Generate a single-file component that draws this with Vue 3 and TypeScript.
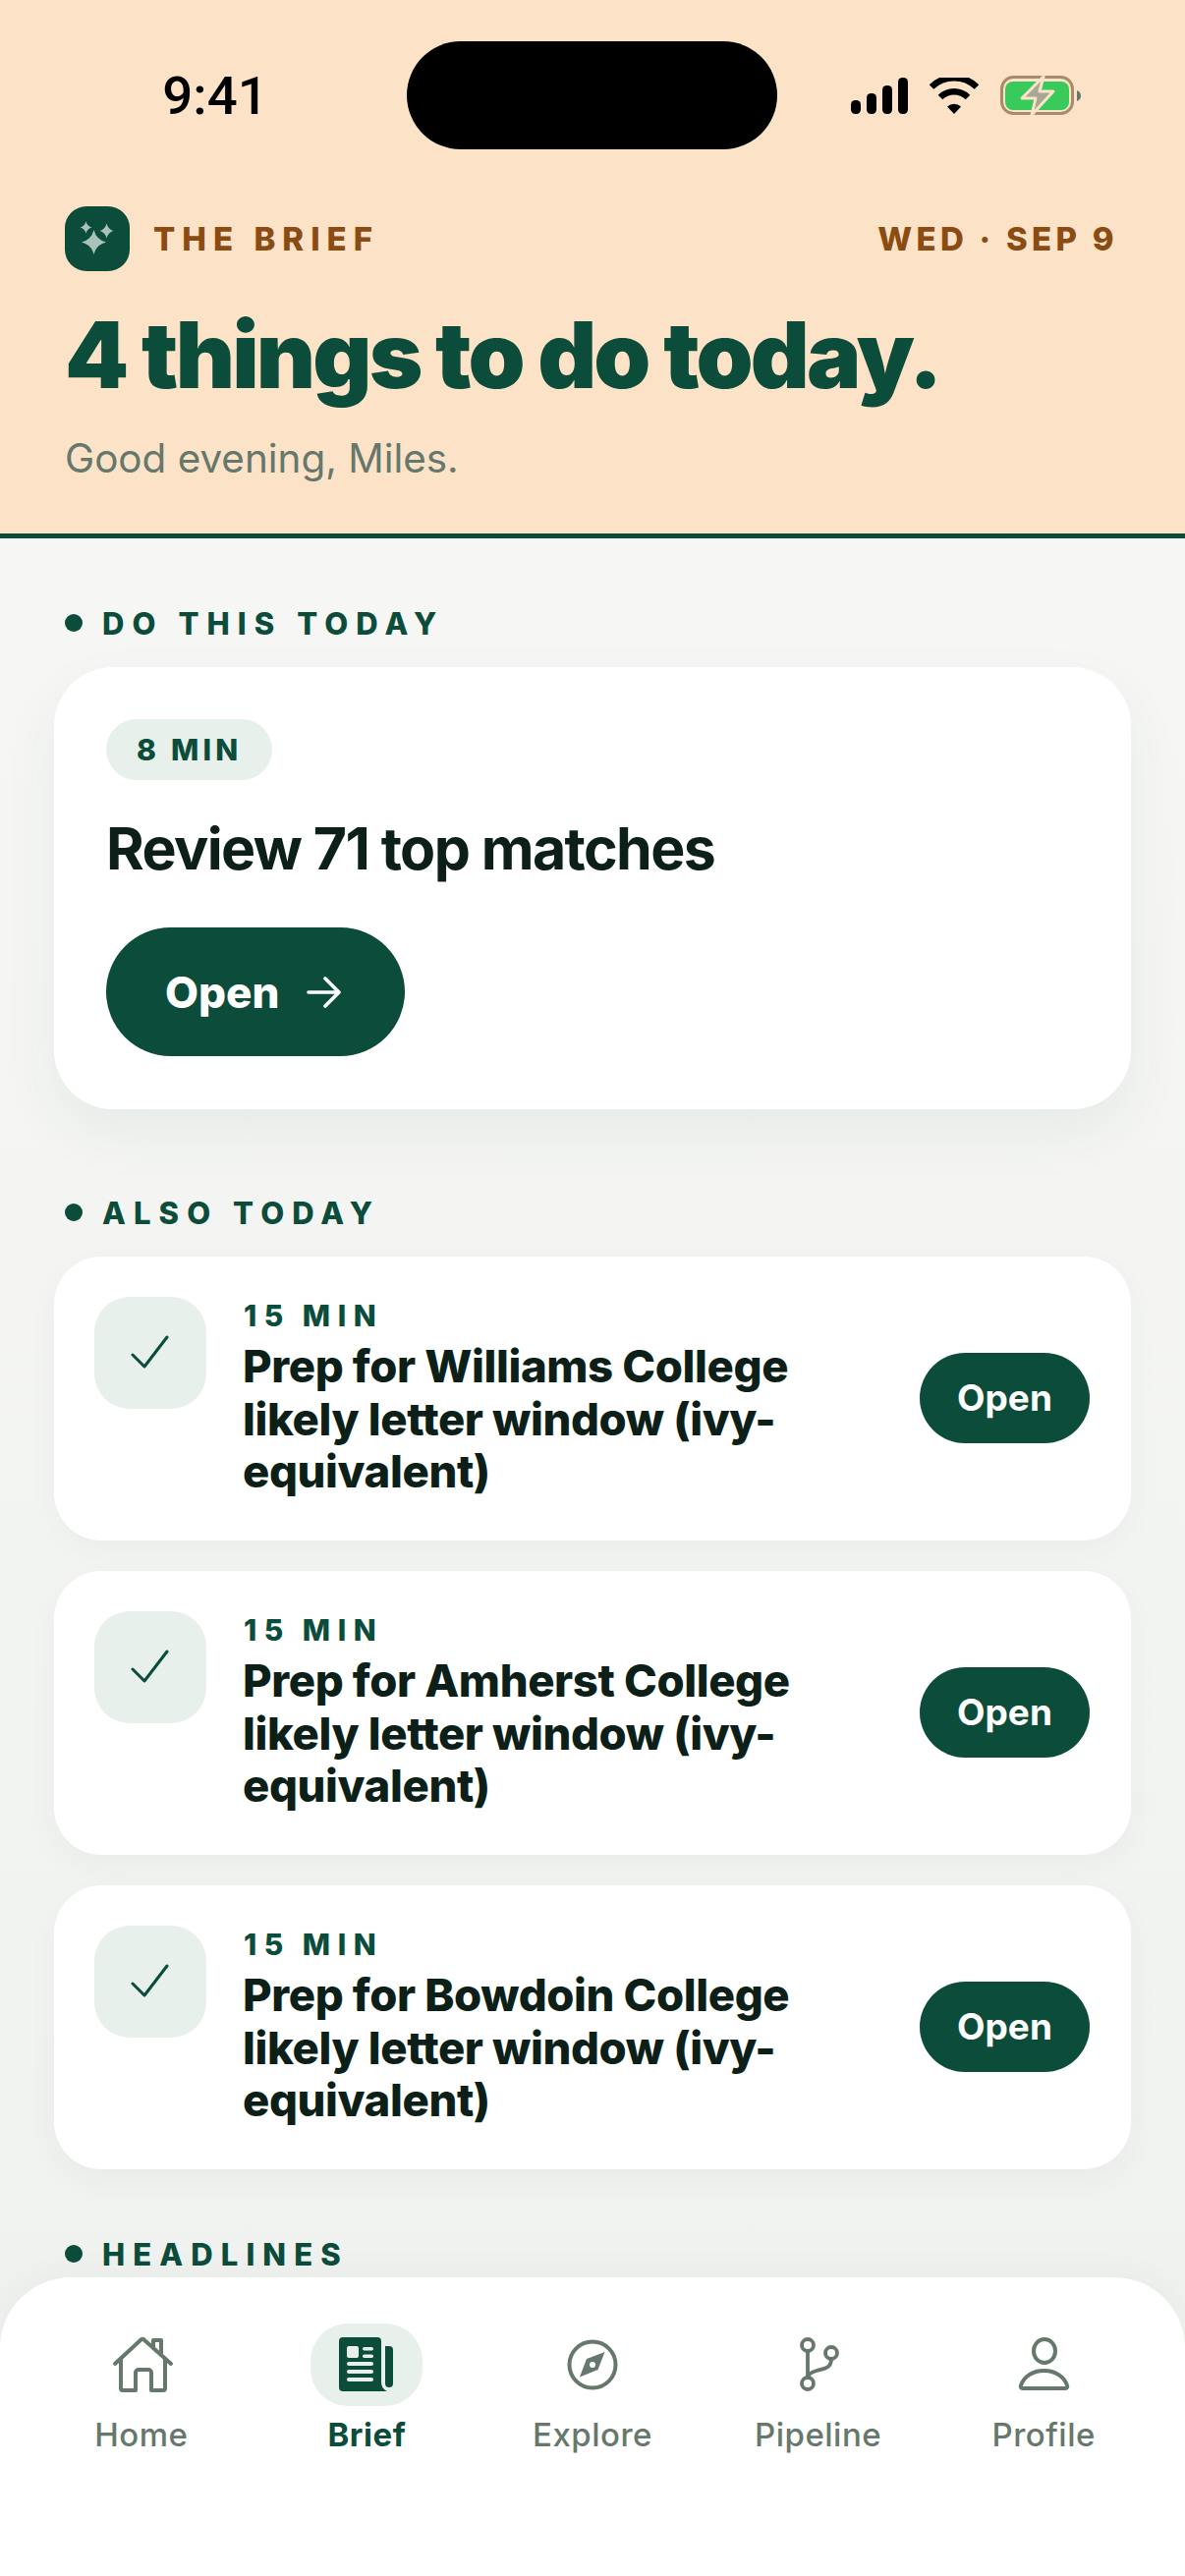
<script setup lang="ts">
interface Task {
  id: number
  mins: string
  college: string
}

const tasks: Task[] = [
  { id: 1, mins: '15 MIN', college: 'Williams College' },
  { id: 2, mins: '15 MIN', college: 'Amherst College' },
  { id: 3, mins: '15 MIN', college: 'Bowdoin College' },
]
</script>

<template>
  <div class="screen">
    <header class="hero">
      <div class="status">
        <span class="status__time">9:41</span>
        <span class="status__island"></span>
        <span class="status__icons">
          <svg width="58" height="37" viewBox="0 0 58 37">
            <rect x="0" y="23" width="10" height="14" rx="4.500" />
            <rect x="16" y="16" width="10" height="21" rx="4.500" />
            <rect x="32" y="8" width="10" height="29" rx="4.500" />
            <rect x="48" y="0" width="10" height="37" rx="4.500" />
          </svg>
          <svg width="50" height="37" viewBox="0 0 50 37">
            <path d="M2 9.500a33 33 0 0 1 46 0" fill="none" stroke="#000" stroke-width="6.500" />
            <path d="M11 20a20 20 0 0 1 28 0" fill="none" stroke="#000" stroke-width="6.500" />
            <path d="M18 29.500a10 10 0 0 1 14 0L25 37z" />
          </svg>
          <svg width="82" height="41" viewBox="0 0 82 41">
            <rect x="1.500" y="1.500" width="72" height="37" rx="12" fill="none" stroke="#a88a6d" stroke-width="3" />
            <rect x="5" y="6" width="65" height="29" rx="8" fill="#38cb5c" />
            <path d="M78 15c3 1 4 3 4 5.500s-1 4.500-4 5.500z" fill="#66776c" />
            <path d="M44 1 22 23h14l-4 17 22-24H40z" fill="#a9a696" stroke="#fce3c8" stroke-width="3" stroke-linejoin="round" />
          </svg>
        </span>
      </div>
      <div class="hero__meta">
        <span class="hero__brand">
          <svg class="hero__logo" width="66" height="66" viewBox="0 0 66 66">
            <rect width="66" height="66" rx="22" fill="#0c4c3a" />
            <g fill="#a9c2ba">
              <path d="M29.500 24Q32 34 42 36.500 32 39 29.500 49 27 39 17 36.500 27 34 29.500 24z" />
              <path d="M21.500 15.500Q22.800 20.200 27.500 21.500 22.800 22.800 21.500 27.500 20.200 22.800 15.500 21.500 20.200 20.200 21.500 15.500z" />
              <path d="M42.500 17.500Q44 23.500 49.500 25 44 26.500 42.500 32.500 41 26.500 35.500 25 41 23.500 42.500 17.500z" />
            </g>
          </svg>
          THE BRIEF
        </span>
        <span class="hero__date">WED · SEP 9</span>
      </div>
      <h1 class="hero__title">4 things to do today.</h1>
      <p class="hero__greeting">Good evening, Miles.</p>
    </header>

    <main class="content">
      <h2 class="section-label"><i></i>DO THIS TODAY</h2>
      <section class="focus">
        <span class="focus__pill">8 MIN</span>
        <h3 class="focus__title">Review 71 top matches</h3>
        <button class="focus__btn" type="button">
          Open
          <svg width="36" height="36" viewBox="0 0 36 36" fill="none" stroke="#fff" stroke-width="3.600" stroke-linecap="round" stroke-linejoin="round">
            <path d="M3 18h31M20 4l14 14-14 14" />
          </svg>
        </button>
      </section>

      <h2 class="section-label section-label--next"><i></i>ALSO TODAY</h2>
      <section class="tasks">
        <article v-for="task in tasks" :key="task.id" class="task">
          <span class="task__check">
            <svg width="40" height="36" viewBox="0 0 40 36" fill="none" stroke="#0c4c3a" stroke-width="3" stroke-linecap="round" stroke-linejoin="round">
              <path d="M2 20l12 12L37 2" />
            </svg>
          </span>
          <div class="task__body">
            <span class="task__mins">{{ task.mins }}</span>
            <h3 class="task__title">Prep for {{ task.college }} likely letter window (ivy-equivalent)</h3>
          </div>
          <button class="task__btn" type="button">Open</button>
        </article>
      </section>

      <h2 class="section-label"><i></i>HEADLINES</h2>
    </main>

    <nav class="tabbar">
      <a class="tab">
        <span class="tab__icon">
          <svg width="66" height="66" viewBox="0 0 66 66" fill="none" stroke="currentColor" stroke-width="4" stroke-linejoin="round" stroke-linecap="round">
            <path d="M6 32 33 7a2 2 0 0 1 2 0L63 32" />
            <path d="M45 15V8h8v15" />
            <path d="M12 27v30a2 2 0 0 0 2 2h13V41a3 3 0 0 1 3-3h10a3 3 0 0 1 3 3v18h12a2 2 0 0 0 2-2V27" />
          </svg>
        </span>
        Home
      </a>
      <a class="tab tab--active">
        <span class="tab__icon">
          <svg width="66" height="66" viewBox="0 0 66 66">
            <path d="M5 9a4 4 0 0 1 4-4h35a4 4 0 0 1 4 4v41c0 5 2 8 6 10H9a4 4 0 0 1-4-4z" fill="#0c4c3a" />
            <path d="M52 14h4a4 4 0 0 1 4 4v34a4 4 0 0 1-8 0z" fill="#0c4c3a" />
            <rect x="13" y="14" width="12" height="12" rx="2" fill="#e8f0ec" />
            <rect x="29" y="15" width="11" height="3.500" rx="1.700" fill="#e8f0ec" />
            <rect x="29" y="22.500" width="11" height="3.500" rx="1.700" fill="#e8f0ec" />
            <rect x="13" y="30" width="27" height="4" rx="2" fill="#e8f0ec" />
            <rect x="13" y="38" width="27" height="4" rx="2" fill="#e8f0ec" />
            <rect x="13" y="46" width="27" height="4" rx="2" fill="#e8f0ec" />
          </svg>
        </span>
        Brief
      </a>
      <a class="tab">
        <span class="tab__icon">
          <svg width="66" height="66" viewBox="0 0 66 66" fill="none" stroke="currentColor" stroke-width="4">
            <circle cx="33" cy="33" r="23.500" />
            <path d="M45.500 20 38.500 38 20 45.500 27 27z" fill="currentColor" stroke="none" />
            <circle cx="33" cy="33" r="3" fill="#fff" stroke="none" />
          </svg>
        </span>
        Explore
      </a>
      <a class="tab">
        <span class="tab__icon">
          <svg width="66" height="66" viewBox="0 0 66 66" fill="none" stroke="currentColor" stroke-width="3.800" stroke-linecap="round">
            <circle cx="22" cy="13" r="6" />
            <circle cx="22" cy="52" r="6" />
            <circle cx="46" cy="21" r="6" />
            <path d="M22 19v27M46 27c0 10-8 10-15 12-6 2-9 4-9 7" />
          </svg>
        </span>
        Pipeline
      </a>
      <a class="tab">
        <span class="tab__icon">
          <svg width="66" height="66" viewBox="0 0 66 66" fill="none" stroke="currentColor" stroke-width="4" stroke-linejoin="round">
            <ellipse cx="34" cy="19" rx="11" ry="12" />
            <path d="M12 57h43a2 2 0 0 0 2-3C54 45 45 39 33.500 39S13 45 10 54a2 2 0 0 0 2 3z" />
          </svg>
        </span>
        Profile
      </a>
    </nav>
  </div>
</template>

<style>
html,
body {
  margin: 0;
  background: #f3f4f1;
}
</style>

<style scoped>
.screen {
  position: relative;
  display: flex;
  flex-direction: column;
  width: 1206px;
  height: 2622px;
  overflow: hidden;
  font-family: Inter, "Liberation Sans", sans-serif;
  background: linear-gradient(180deg, #f8f9f7 0%, #eff1ee 100%);
}

/* Header */
.hero {
  flex-shrink: 0;
  padding: 42px 66px 0;
  height: 548px;
  box-sizing: border-box;
  background: #fce3c8;
  border-bottom: 5px solid #0c4c3a;
}

.status {
  display: grid;
  grid-template-columns: 414px 377px 1fr;
  align-items: center;
  height: 110px;
  margin: 0 -66px;
}

.status__time {
  padding-left: 24px;
  text-align: center;
  font-family: Roboto, "Liberation Sans", sans-serif;
  font-size: 54.500px;
  font-weight: 500;
  color: #000;
}

.status__island {
  height: 110px;
  border-radius: 55px;
  background: #000;
}

.status__icons {
  display: flex;
  align-items: center;
  justify-content: flex-end;
  gap: 22px;
  padding-right: 106px;
}

.hero__meta {
  display: flex;
  align-items: center;
  justify-content: space-between;
  margin-top: 58px;
}

.hero__brand {
  display: flex;
  align-items: center;
  gap: 24px;
  font-size: 33px;
  font-weight: 800;
  letter-spacing: 7px;
  color: #8b4c13;
}

.hero__date {
  margin-right: 2px;
  font-size: 33px;
  font-weight: 800;
  letter-spacing: 4.300px;
  color: #8b4c13;
}

.hero__title {
  margin: 30px 0 0;
  font-size: 93px;
  line-height: 110px;
  font-weight: 900;
  letter-spacing: -2.900px;
  color: #0c4c3a;
}

.hero__greeting {
  margin: 26px 0 0;
  font-size: 40.400px;
  line-height: 50px;
  color: #66776c;
}

/* Content */
.content {
  flex: 1;
  min-height: 0;
  padding: 0 55px;
}

.section-label {
  display: flex;
  align-items: center;
  gap: 20px;
  margin: 66px 0 0 11px;
  height: 40px;
  font-size: 31px;
  font-weight: 800;
  letter-spacing: 8.100px;
  color: #0c4c3a;
}

.section-label i {
  width: 18px;
  height: 18px;
  border-radius: 50%;
  background: #0c4c3a;
}

.section-label--next {
  margin-top: 85px;
}

.focus {
  margin-top: 25px;
  padding: 53px 53px;
  height: 450px;
  box-sizing: border-box;
  border-radius: 60px;
  background: #fff;
  box-shadow: 0 24px 60px rgba(12, 76, 58, 0.06);
}

.focus__pill {
  display: inline-block;
  padding: 0 31px;
  height: 62px;
  line-height: 62px;
  border-radius: 31px;
  background: #e8f0ec;
  font-size: 30px;
  font-weight: 800;
  letter-spacing: 4.200px;
  color: #0c4c3a;
}

.focus__title {
  margin: 34px 0 0;
  font-size: 59px;
  line-height: 72px;
  font-weight: 700;
  letter-spacing: -1.600px;
  color: #0c1f18;
}

.focus__btn {
  display: flex;
  align-items: center;
  gap: 27px;
  margin-top: 44px;
  padding: 0 65px 0 60px;
  height: 131px;
  border: 0;
  border-radius: 66px;
  background: #0c4c3a;
  font: 800 44px Inter, sans-serif;
  color: #fff;
}

.tasks {
  display: flex;
  flex-direction: column;
  gap: 31px;
  margin-top: 25px;
}

.task {
  display: flex;
  align-items: flex-start;
  gap: 37px;
  height: 289px;
  padding: 41px 42px 41px 41px;
  box-sizing: border-box;
  border-radius: 48px;
  background: #fff;
  box-shadow: 0 10px 30px rgba(12, 76, 58, 0.04);
}

.task__check {
  display: flex;
  align-items: center;
  justify-content: center;
  flex-shrink: 0;
  width: 114px;
  height: 114px;
  border-radius: 36px;
  background: #e8f0ec;
}

.task__body {
  flex: 1;
  min-width: 0;
  padding-top: 1px;
  padding-right: 20px;
}

.task__mins {
  display: block;
  height: 36px;
  line-height: 36px;
  margin-left: 1px;
  font-size: 30px;
  font-weight: 800;
  letter-spacing: 7.500px;
  word-spacing: -2px;
  color: #0c4c3a;
}

.task__title {
  margin: 7px 0 0;
  font-size: 45.500px;
  line-height: 53.700px;
  font-weight: 800;
  letter-spacing: -0.400px;
  color: #0c1f18;
}

.task__btn {
  align-self: center;
  flex-shrink: 0;
  width: 173px;
  height: 92px;
  margin-top: -2px;
  border: 0;
  border-radius: 46px;
  background: #0c4c3a;
  font: 700 37px Inter, sans-serif;
  color: #fff;
}

/* Tab bar */
.tabbar {
  position: absolute;
  left: 0;
  right: 0;
  bottom: 0;
  display: grid;
  grid-template-columns: repeat(5, 1fr);
  height: 304px;
  padding: 47px 29px 0;
  box-sizing: border-box;
  border-radius: 72px 72px 0 0;
  background: #fff;
  box-shadow: 0 -6px 30px rgba(12, 76, 58, 0.04);
}

.tab {
  display: flex;
  flex-direction: column;
  align-items: center;
  font-size: 33px;
  font-weight: 500;
  letter-spacing: 0.500px;
  color: #66776c;
}

.tab__icon {
  display: flex;
  align-items: center;
  justify-content: center;
  width: 114px;
  height: 84px;
  border-radius: 38px;
  margin-bottom: 9px;
}

.tab--active {
  font-weight: 700;
  color: #0c4c3a;
}

.tab--active .tab__icon {
  background: #e8f0ec;
}
</style>
